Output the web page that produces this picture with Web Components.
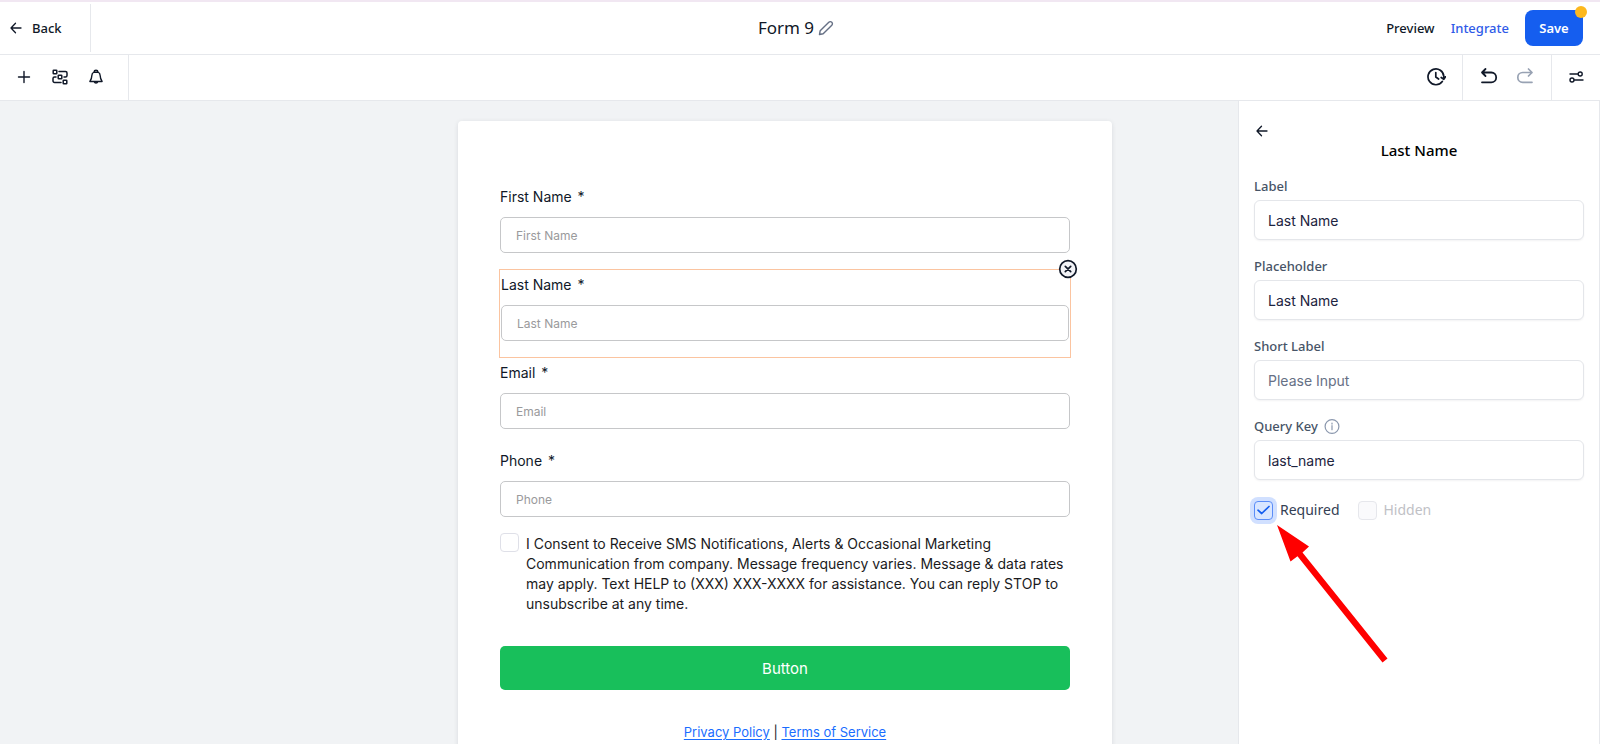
<!DOCTYPE html>
<html lang="en">
<head>
<meta charset="utf-8">
<title>Form 9</title>
<style>
    body {
        margin: 0;
        font-family: "Noto Sans", "Open Sans", sans-serif;
        font-size: 13px;
        color: #101828;
        --line: #e6e8ec;
        --blue: #155eef;
        --form-font: Inter, "Liberation Sans", sans-serif;
    }
</style>
</head>
<body>

<form-builder>
    <builder-header slot="header" name="Form 9"></builder-header>
    <builder-toolbar slot="toolbar"></builder-toolbar>

    <form-card slot="canvas">
        <form-field placeholder="First Name">First Name</form-field>
        <form-field placeholder="Last Name" selected>Last Name</form-field>
        <form-field placeholder="Email">Email</form-field>
        <form-field placeholder="Phone">Phone</form-field>
        <form-consent>I Consent to Receive SMS Notifications, Alerts &amp; Occasional Marketing Communication from company. Message frequency varies. Message &amp; data rates may apply. Text HELP to (XXX) XXX-XXXX for assistance. You can reply STOP to unsubscribe at any time.</form-consent>
    </form-card>

    <settings-panel slot="panel" heading="Last Name">
        <setting-field value="Last Name">Label</setting-field>
        <setting-field value="Last Name">Placeholder</setting-field>
        <setting-field placeholder="Please Input">Short Label</setting-field>
        <setting-field value="last_name" info>Query Key</setting-field>
        <setting-check slot="checks" checked>Required</setting-check>
        <setting-check slot="checks" disabled>Hidden</setting-check>
    </settings-panel>
</form-builder>

<script>
(() => {

    const icons = {
        back: '<path d="M13 8H3.5M7.5 3.2 3 8l4.5 4.8"/>',
        pencil: '<path d="M1.500 14.500l.7-3.800 8.600-8.500a2.100 2.100 0 0 1 3 3L5.200 13.800z"/>',
        plus: '<path d="M10 4.500v11M4.500 10h11"/>',
        elements: '<rect x="3.200" y="3.200" width="3.600" height="3.600" rx=".6"/><rect x="8.200" y="8.200" width="3.600" height="3.600" rx=".6"/><rect x="13.200" y="13.200" width="3.600" height="3.600" rx=".6"/><path d="M9 4.500h6.500a1.500 1.500 0 0 1 1.500 1.500v2.500a1.500 1.500 0 0 1-1.500 1.500H14M6 10H4.500A1.500 1.500 0 0 0 3 11.500V14a1.500 1.500 0 0 0 1.500 1.500H11"/>',
        bell: '<path d="M10 3.200a2 2 0 0 1 2 1.800c1.500.8 2.200 2.200 2.200 3.800 0 2.800.8 4 1.900 5.700H3.900c1.100-1.700 1.900-2.900 1.900-5.700 0-1.600.7-3 2.200-3.800a2 2 0 0 1 2-1.800zM7.800 5.200h4.400M8.200 14.800a1.900 1.900 0 0 0 3.600 0"/>',
        history: '<path d="M16.300 14.500A7.900 7.900 0 1 1 17.800 9.500V11M15.200 10.500l2.600 1.800 1.700-2.500M9.800 5.500V10l2.800 2"/>',
        undo: '<path d="M6.500 2 3 5.500 6.500 9M3 5.500h9.300a4.900 4.900 0 0 1 0 9.800H3"/>',
        redo: '<path d="M13.500 2 17 5.500 13.500 9M17 5.500H7.700a4.900 4.900 0 0 0 0 9.800H17"/>',
        sliders: '<path d="M4 7h8M8.500 13H17"/><circle cx="14.200" cy="7" r="2"/><circle cx="6" cy="13" r="2"/>',
        info: '<circle cx="8" cy="8.500" r="6.900"/><path d="M8 7.700v4M8 5.100v1"/>',
        close: '<circle cx="10" cy="10" r="8.300" fill="#f2f3f7"/><path d="M7.300 7.300l5.400 5.400M12.700 7.300l-5.400 5.400"/>',
        check: '<path d="M3 8.200 6.700 11.500l7.300-7"/>'
    };

    const icon = (name, size = 20, stroke = 1.5) => `
        <svg width="${size}" height="${size}" viewBox="0 0 ${size} ${size}" fill="none" stroke="currentColor"
            stroke-width="${stroke}" stroke-linecap="round" stroke-linejoin="round" aria-hidden="true">${icons[name]}</svg>`;

    // shared by every shadow root
    const base = `
        * { box-sizing: border-box; }
        svg { display: block; flex: none; }
        button {
            display: flex;
            align-items: center;
            justify-content: center;
            margin: 0;
            padding: 0;
            border: 0;
            background: none;
            color: inherit;
            font: inherit;
            cursor: pointer;
        }
        input { font: inherit; margin: 0; }
    `;

    const define = (name, render, ready) => {
        window.customElements.define(name, class extends HTMLElement {
            constructor() {
                super();
                this.attachShadow({mode: 'open'});
            }

            connectedCallback() {
                const template = document.createElement('template');
                template.innerHTML = render(this);
                this.shadowRoot.replaceChildren(template.content.cloneNode(true));
                if(ready) ready(this, this.shadowRoot);
            }
        });
    };

    const attr = (el, name) => el.getAttribute(name) || '';

    define('form-builder', () => `
        <style>
            ${base}
            :host {
                display: grid;
                grid-template-rows: auto auto minmax(0, 1fr);
                height: 100vh;
                background: #fff;
            }
            .body {
                display: grid;
                grid-template-columns: minmax(0, 1fr) 362px;
                min-height: 0;
            }
            main {
                display: flex;
                justify-content: center;
                align-items: flex-start;
                padding: 20px 0 0 332px;
                background: #f1f3f5;
                overflow: hidden;
            }
        </style>
        <slot name="header"></slot>
        <slot name="toolbar"></slot>
        <div class="body">
            <main><slot name="canvas"></slot></main>
            <slot name="panel"></slot>
        </div>
    `);

    define('builder-header', el => `
        <style>
            ${base}
            :host {
                display: grid;
                grid-template-columns: 1fr auto 1fr;
                align-items: center;
                height: 55px;
                box-sizing: border-box;
                border-top: 2px solid #f1e7f2;
                border-bottom: 1px solid var(--line);
                font-weight: 500;
            }
            .back {
                width: 91px;
                height: 48px;
                padding-left: 8px;
                gap: 8px;
                justify-content: flex-start;
                border-right: 1px solid var(--line);
            }
            .title {
                display: flex;
                align-items: center;
                gap: 4px;
                margin-right: 8px;
            }
            h1 {
                margin: 0;
                font-size: 17px;
                line-height: 24px;
                font-weight: 400;
            }
            .title button { color: #667085; }
            .actions {
                display: flex;
                align-items: center;
                justify-content: flex-end;
                gap: 16px;
                padding-right: 17px;
            }
            .integrate { color: #2f5be8; }
            .save {
                position: relative;
                width: 58px;
                height: 36px;
                border-radius: 8px;
                background: var(--blue);
                color: #fff;
                font-weight: 600;
            }
            .save::after {
                content: "";
                position: absolute;
                top: -4px;
                right: -4px;
                width: 12px;
                height: 12px;
                border-radius: 50%;
                background: #fdb81e;
            }
        </style>
        <button class="back">${icon('back', 16, 1.3)}Back</button>
        <div class="title">
            <h1>${attr(el, 'name')}</h1>
            <button aria-label="Rename">${icon('pencil', 16, 1.4)}</button>
        </div>
        <div class="actions">
            <button>Preview</button>
            <button class="integrate">Integrate</button>
            <button class="save">Save</button>
        </div>
    `);

    define('builder-toolbar', () => `
        <style>
            ${base}
            :host {
                display: flex;
                justify-content: space-between;
                height: 46px;
                box-sizing: border-box;
                border-bottom: 1px solid var(--line);
            }
            .group, .right {
                display: flex;
            }
            .group {
                align-items: center;
                gap: 16px;
                padding: 0 16px 2px;
                border-left: 1px solid var(--line);
            }
            .group.add {
                padding: 0 22px 2px 14px;
                border-left: 0;
                border-right: 1px solid var(--line);
            }
            .group.plain { border-left: 0; }
            .group.view { padding: 0 14px 2px; }
            button:disabled { color: #98a2b3; }
        </style>
        <div class="group add">
            <button aria-label="Add element">${icon('plus', 20, 1.4)}</button>
            <button aria-label="Elements">${icon('elements', 20, 1.5)}</button>
            <button aria-label="Notifications">${icon('bell', 20, 1.4)}</button>
        </div>
        <div class="right">
            <div class="group plain">
                <button aria-label="Version history">${icon('history', 20, 1.7)}</button>
            </div>
            <div class="group">
                <button aria-label="Undo">${icon('undo', 20, 1.8)}</button>
                <button aria-label="Redo" disabled>${icon('redo', 20, 1.7)}</button>
            </div>
            <div class="group view">
                <button aria-label="Form settings">${icon('sliders', 20, 1.4)}</button>
            </div>
        </div>
    `);

    define('form-card', () => `
        <style>
            ${base}
            :host {
                display: block;
                flex: 0 1 654px;
                box-sizing: border-box;
                padding: 60px 42px;
                border-radius: 4px;
                background: #fff;
                box-shadow: 0 1px 5px rgba(16, 24, 40, .1);
                font-family: var(--form-font);
            }
            .submit {
                width: 100%;
                height: 44px;
                margin: 32px 0;
                border-radius: 5px;
                background: #18bf5b;
                color: #fff;
                font-size: 15px;
            }
            footer {
                text-align: center;
                line-height: 20px;
            }
            a {
                color: #1a6dff;
                text-underline-offset: 2px;
            }
        </style>
        <slot></slot>
        <button class="submit">Button</button>
        <footer><a href="#privacy">Privacy Policy</a> | <a href="#terms">Terms of Service</a></footer>
    `);

    define('form-field', el => `
        <style>
            ${base}
            :host {
                display: block;
                position: relative;
                padding-bottom: 16px;
            }
            :host([selected]) {
                padding-left: 1px;
                padding-right: 1px;
            }
            :host([selected])::before {
                content: "";
                position: absolute;
                inset: 0 -1px -1px;
                border: 1px solid #fbc4a0;
                pointer-events: none;
            }
            label {
                display: block;
                margin-bottom: 4px;
                font-size: 14px;
                line-height: 32px;
            }
            .star { margin-left: 2px; }
            input {
                display: block;
                width: 100%;
                height: 36px;
                padding: 0 15px;
                border: 1px solid #c6c7c9;
                border-radius: 5px;
                background: #fff;
                font-size: 12px;
            }
            input::placeholder { color: #9a9a9c; }
            .remove {
                position: absolute;
                top: -10px;
                right: -8px;
            }
        </style>
        <label for="input"><slot></slot> <span class="star">*</span></label>
        <input id="input" type="text" placeholder="${attr(el, 'placeholder')}">
        ${el.hasAttribute('selected') ? `<button class="remove" aria-label="Remove field">${icon('close', 20, 1.7)}</button>` : ''}
    `, (el, root) => {
        const remove = root.querySelector('.remove');
        if(remove) remove.addEventListener('click', () => el.remove());
    });

    define('form-consent', () => `
        <style>
            ${base}
            :host {
                display: flex;
                align-items: flex-start;
                gap: 7px;
                font-size: 14px;
                line-height: 20px;
                color: #1b1b1d;
            }
            input {
                appearance: none;
                flex: none;
                width: 19px;
                height: 19px;
                border: 1px solid #dfe0e8;
                border-radius: 4px;
                background: #fff;
            }
            input:checked { background: var(--blue); }
            label { padding-top: 1px; }
        </style>
        <input id="consent" type="checkbox">
        <label for="consent"><slot></slot></label>
    `);

    define('settings-panel', el => `
        <style>
            ${base}
            :host {
                display: block;
                box-sizing: border-box;
                padding: 22px 15px;
                border: solid var(--line);
                border-width: 0 1px;
                background: #fff;
            }
            h2 {
                margin: 0 0 14px;
                font-size: 15px;
                line-height: 23px;
                font-weight: 500;
                text-align: center;
                color: #000;
            }
            .fields {
                display: grid;
                gap: 16px;
            }
            .checks {
                display: flex;
                position: relative;
                gap: 18px;
                margin-top: 20px;
            }
            .pointer {
                position: absolute;
                top: 25px;
                left: 23px;
                pointer-events: none;
            }
        </style>
        <button aria-label="Back to elements">${icon('back', 16, 1.3)}</button>
        <h2>${attr(el, 'heading')}</h2>
        <div class="fields"><slot></slot></div>
        <div class="checks">
            <slot name="checks"></slot>
            <svg class="pointer" width="112" height="138" viewBox="0 0 112 138" fill="#f00" aria-hidden="true">
                <path d="M0 0l32 21.500-6.500 6L110.500 133.500l-5 4L20.500 31.200l-7 5.300z"/>
            </svg>
        </div>
    `);

    define('setting-field', el => `
        <style>
            ${base}
            :host { display: block; }
            .label {
                display: flex;
                align-items: center;
                gap: 6px;
                margin-bottom: 4px;
                line-height: 20px;
                font-weight: 500;
                color: #475467;
            }
            .label svg { color: #8a97ad; }
            input {
                display: block;
                width: 100%;
                height: 40px;
                padding: 0 13px;
                border: 1px solid #e4e6ea;
                border-radius: 6px;
                background: #fff;
                box-shadow: 0 1px 2px rgba(16, 24, 40, .05);
                color: #1d2440;
                font-family: var(--form-font);
                font-size: 14px;
            }
            input::placeholder { color: #667085; }
        </style>
        <div class="label">
            <label for="input"><slot></slot></label>
            ${el.hasAttribute('info') ? icon('info', 16, 1.2) : ''}
        </div>
        <input id="input" type="text" value="${attr(el, 'value')}" placeholder="${attr(el, 'placeholder')}">
    `);

    define('setting-check', el => `
        <style>
            ${base}
            :host {
                display: flex;
                align-items: center;
                gap: 7px;
                font-size: 14px;
                line-height: 20px;
                color: #344054;
            }
            :host([disabled]) { color: #bfc1c6; }
            .box {
                display: grid;
                color: transparent;
            }
            .box > * { grid-area: 1 / 1; }
            .box svg {
                place-self: center;
                pointer-events: none;
            }
            input {
                appearance: none;
                width: 19px;
                height: 19px;
                border: 1px solid #e6e7ec;
                border-radius: 4px;
                background: #fafafc;
            }
            input:checked {
                border-color: #5b8df8;
                background: #d9e6ff;
                box-shadow: 0 0 0 4px #d1e0ff;
            }
            input:checked + svg { color: var(--blue); }
        </style>
        <span class="box">
            <input id="check" type="checkbox" ${el.hasAttribute('checked') ? 'checked' : ''} ${el.hasAttribute('disabled') ? 'disabled' : ''}>
            ${icon('check', 17, 1.7)}
        </span>
        <label for="check"><slot></slot></label>
    `);

})();
</script>
</body>
</html>
